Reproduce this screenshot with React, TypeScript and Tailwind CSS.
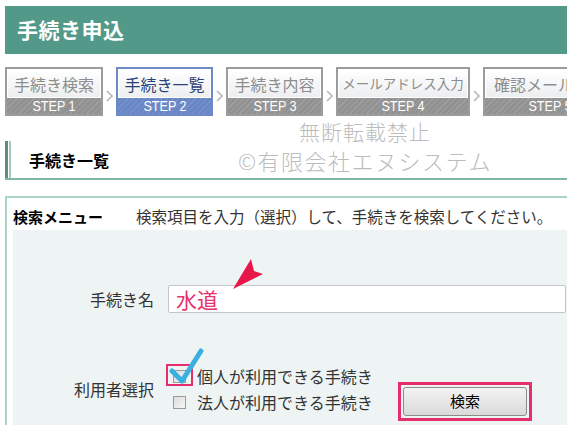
import React from 'react';

const FONT = "font-['Noto_Sans_CJK_JP','Noto_Sans',sans-serif]";

interface StepProps {
  label: string;
  step: number;
  active?: boolean;
  width: string;
  size?: string;
}

const Step: React.FC<StepProps> = ({ label, step, active, width, size = 'text-[16px]' }) => (
  <div
    className={`${width} shrink-0 flex flex-col border-2 ${
      active ? 'border-[#6d8ac7]' : 'border-[#9c9c9c]'
    }`}
  >
    <div className="h-[29px] flex items-center justify-center bg-gradient-to-b from-white to-[#eceef0] border border-white overflow-hidden">
      <span
        className={`${size} leading-none whitespace-nowrap ${
          active ? 'text-[#2d3f78]' : 'text-[#8d8d8d]'
        }`}
      >
        {label}
      </span>
    </div>
    <div
      className={`h-[16px] flex items-center justify-center ${
        active
          ? 'bg-[repeating-linear-gradient(135deg,#6a87c5_0px,#6a87c5_3px,#7892cc_3px,#7892cc_4px)]'
          : 'bg-[repeating-linear-gradient(135deg,#929292_0px,#929292_3px,#a0a0a0_3px,#a0a0a0_4px)]'
      }`}
    >
      <span className="font-['Liberation_Sans',sans-serif] text-[14px] leading-none text-white scale-x-90 whitespace-nowrap">
        STEP {step}
      </span>
    </div>
  </div>
);

const Chevron = () => (
  <div className="w-[13px] shrink-0 flex items-center justify-center pt-[8px]">
    <svg width="7" height="12" viewBox="0 0 7 12">
      <polyline points="1,1 6,6 1,11" fill="none" stroke="#b9b9b9" strokeWidth="1.6" />
    </svg>
  </div>
);

export default function App() {
  return (
    <div className={`${FONT} w-[567px] h-[425px] overflow-hidden bg-white relative text-[#333]`}>
      {/* title bar */}
      <div className="mt-[6px] ml-[5px] h-[48px] bg-[#52998a] flex items-center pl-[12px]">
        <h1 className="text-white text-[21px] font-bold tracking-[0.5px]">手続き申込</h1>
      </div>

      {/* steps */}
      <div className="mt-[13px] ml-[5px] flex items-stretch">
        <Step label="手続き検索" step={1} width="w-[98px]" />
        <Chevron />
        <Step label="手続き一覧" step={2} active width="w-[97px]" />
        <Chevron />
        <Step label="手続き内容" step={3} width="w-[97px]" />
        <Chevron />
        <Step label="メールアドレス入力" step={4} width="w-[134px]" size="text-[13.5px]" />
        <Chevron />
        <Step label="確認メール送信" step={5} width="w-[134px]" />
      </div>

      {/* section heading */}
      <div className="mt-[25px] ml-[5px] h-[39px] flex border-b-2 border-[#80b6a6]">
        <div className="w-[3px] bg-[#5f8e80]" />
        <div className="w-[1px] bg-white" />
        <div className="w-[2px] bg-[#a6cbbf]" />
        <div className="flex items-center pl-[18px] text-[16px] font-bold text-black">手続き一覧</div>
      </div>

      {/* watermark */}
      <div className="absolute left-[235px] top-[121px] w-[260px] flex flex-col items-center text-[#bcbcbc] font-light leading-none pointer-events-none">
        <span className="text-[21px] tracking-[1px]">無断転載禁止</span>
        <span className="mt-[7px] text-[22px] tracking-[1.5px]">©有限会社エヌシステム</span>
      </div>

      {/* search panel */}
      <div className="mt-[16px] ml-[5px] border-t-2 border-l-2 border-[#a9d4c7] pl-[6px]">
        <div className="h-[32px] flex items-end pb-[2px]">
          <span className="font-bold text-black text-[15px] w-[123px]">検索メニュー</span>
          <span className="text-[#333] text-[15.5px] whitespace-nowrap">検索項目を入力（選択）して、手続きを検索してください。</span>
        </div>

        <div className="bg-[#eef4f4] pt-[55px] pb-[20px] text-[16px]">
          {/* procedure name */}
          <div className="flex items-center">
            <div className="w-[142px] text-right pr-[1px]">手続き名</div>
            <div className="relative ml-[13px] w-[398px] h-[28px] bg-white border border-[#c4c7c9] rounded-[2px] flex items-center pl-[7px]">
              <span className="text-[21px] text-[#e6336b] leading-none">水道</span>
              <svg
                className="absolute left-[60px] top-[-30px]"
                width="40"
                height="36"
                viewBox="0 0 40 36"
              >
                <polygon points="4,33 22,3 25,15 34,18" fill="#e8174a" />
              </svg>
            </div>
          </div>

          {/* user type */}
          <div className="mt-[50px] flex items-start">
            <div className="w-[142px] h-[52px] flex items-center justify-end pr-[1px]">利用者選択</div>
            <div className="ml-[13px] w-[230px] flex flex-col">
              <div className="h-[26px] flex items-center pl-[5px]">
                <div className="relative w-[13px] h-[13px] border border-[#9a9a9a] bg-gradient-to-br from-[#dcdcdc] to-[#f6f6f6] shrink-0">
                  <div className="absolute left-[-8px] top-[-7px] w-[27px] h-[22px] border-2 border-[#e52f6c]" />
                  <svg
                    className="absolute left-[-5px] top-[-24px]"
                    width="38"
                    height="40"
                    viewBox="0 0 38 40"
                  >
                    <polyline
                      points="3,24 13,34 32,4"
                      fill="none"
                      stroke="#3aafe0"
                      strokeWidth="5"
                      strokeLinecap="round"
                      strokeLinejoin="round"
                    />
                  </svg>
                </div>
                <span className="ml-[11px] whitespace-nowrap">個人が利用できる手続き</span>
              </div>
              <div className="h-[26px] flex items-center pl-[5px]">
                <div className="w-[13px] h-[13px] border border-[#9a9a9a] bg-gradient-to-br from-[#dcdcdc] to-[#f6f6f6] shrink-0" />
                <span className="ml-[11px] whitespace-nowrap">法人が利用できる手続き</span>
              </div>
            </div>
            <div className="mt-[19px] border-[3px] border-[#e62e6b] p-[2px]">
              <button
                type="button"
                className="w-[124px] h-[29px] rounded-[3px] border border-[#8b8b8b] bg-gradient-to-b from-[#f4f4f4] to-[#d9d9d9] text-[15px] text-black"
              >
                検索
              </button>
            </div>
          </div>
        </div>
      </div>
    </div>
  );
}
